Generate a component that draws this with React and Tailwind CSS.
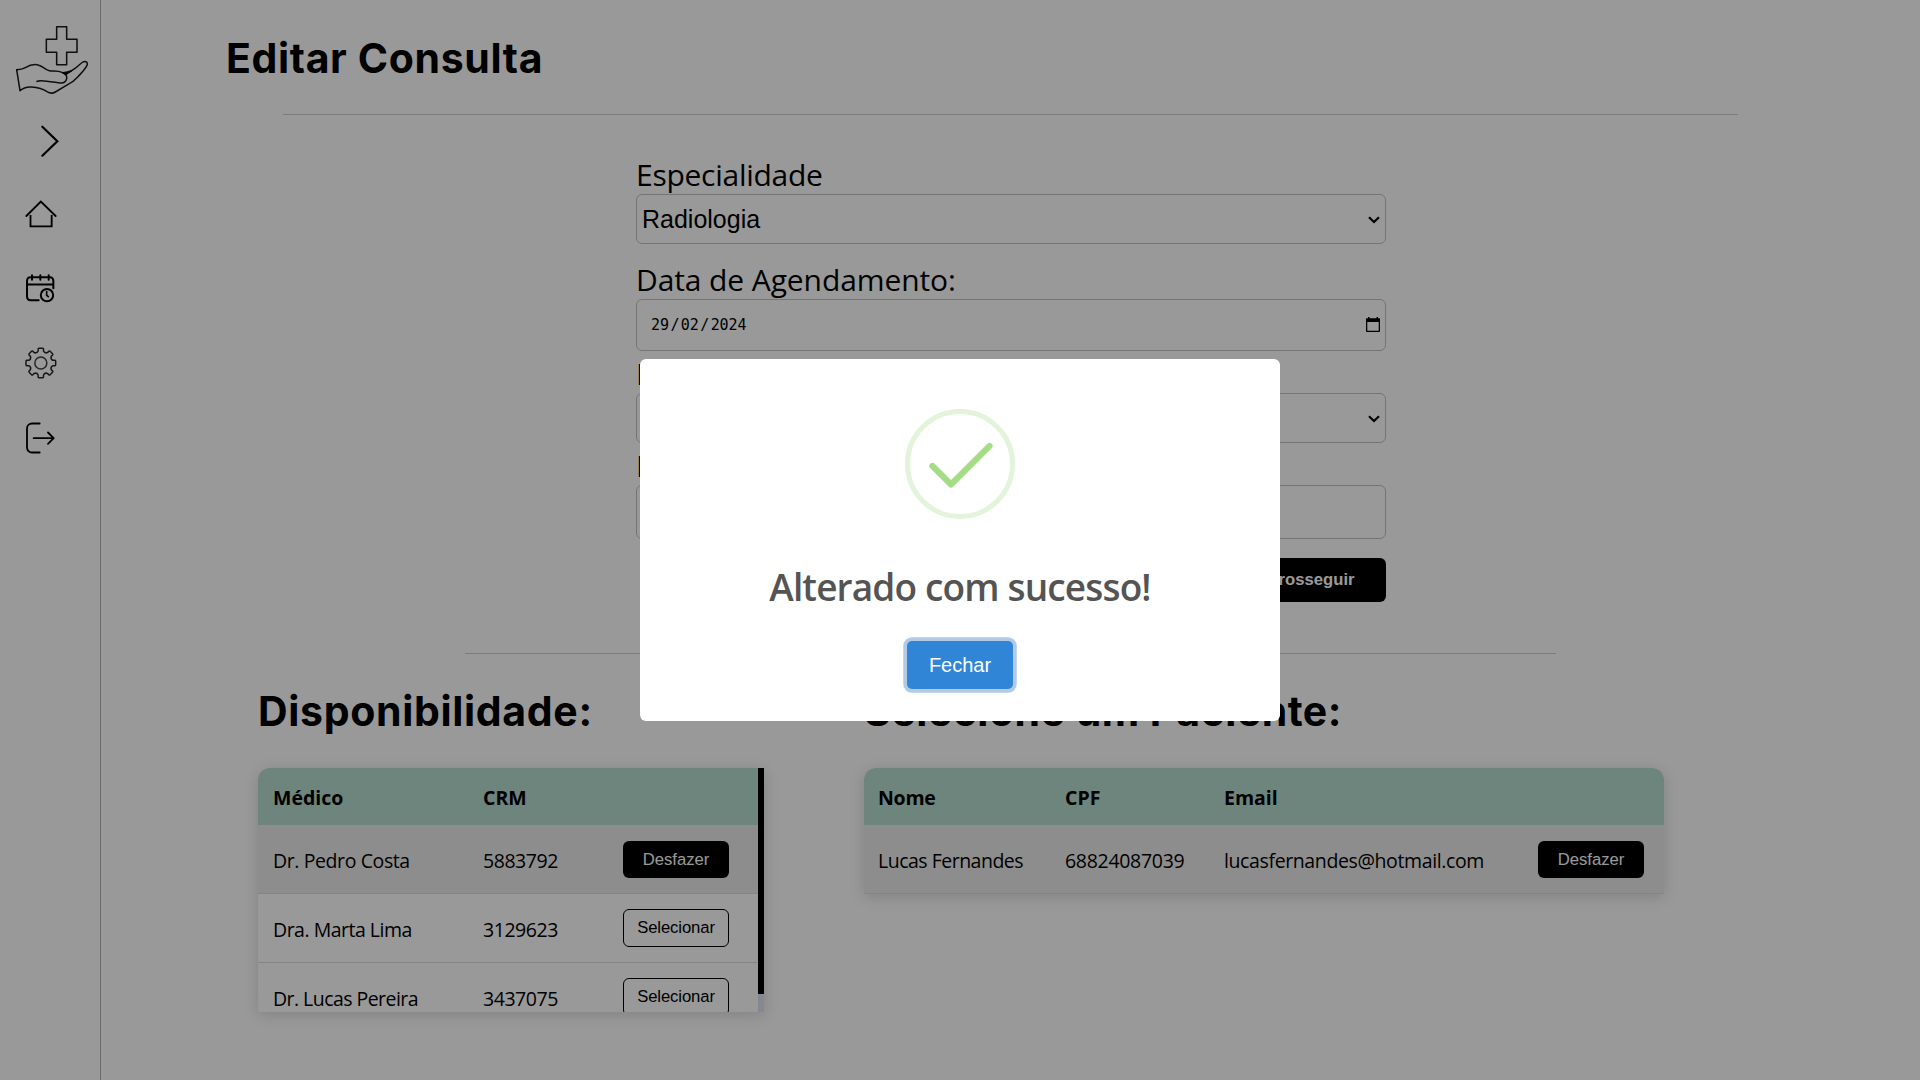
import React from "react";

const doctors = [
  { name: "Dr. Pedro Costa", crm: "5883792", selected: true, track: "tracking-[-0.4px]" },
  { name: "Dra. Marta Lima", crm: "3129623", selected: false, track: "tracking-[-0.5px]" },
  { name: "Dr. Lucas Pereira", crm: "3437075", selected: false, track: "tracking-[-0.55px]" },
];

function Logo() {
  return (
    <svg width="74" height="70" viewBox="43 75 222 210" fill="none" stroke="#000" strokeOpacity="0.9" strokeWidth="4.600" strokeLinejoin="round" strokeLinecap="round">
      <path d="M168 80h30v38h31v39h-31v37h-30v-37h-31v-39h31z" />
      <path d="M48 209C59 209 66 208 74 203C87 195 98 193 109 194C126 196 130 209 146 212C158 214 172 211 184 217C196 222 200 228 198 236C196 245 190 250 179 249C158 246 137 242 121 242C115 242 111 242 109 244" />
      <path d="M186 218C200 218 212 214 222 206C233 198 242 188 249 185C257 182 262 189 259 196C255 207 243 218 232 230C222 241 213 248 201 254L164 276C154 282 147 280 139 275C128 267 108 262 92 261C78 260 67 264 58 272L48 209" />
      <path d="M188 219C200 219 208 216 215 212L197 224Z" fill="#000" strokeWidth="2" />
    </svg>
  );
}

function ChevronRightIcon() {
  return (
    <svg width="20" height="34" viewBox="120 370 60 102" fill="none" stroke="#000" strokeWidth="6.500" strokeLinecap="round" strokeLinejoin="miter">
      <path d="M127 378l45 43.500-45 43.500" />
    </svg>
  );
}

function HomeIcon() {
  return (
    <svg width="32" height="28" viewBox="74 599 96 84" fill="none" stroke="#000" strokeWidth="5.500" strokeLinecap="round">
      <path d="M78 647l43.500-43.500L166 647" />
      <path d="M90.500 647v31h63.500v-31" strokeLinecap="square" />
    </svg>
  );
}

function CalendarIcon() {
  return (
    <svg width="30" height="30" viewBox="76 42 90 90" fill="none" stroke="#000" strokeWidth="6" strokeLinecap="round">
      <path d="M117 120.500H92a10 10 0 0 1-10-10V62a10 10 0 0 1 10-10h59a10 10 0 0 1 10 10v23M82 73.500h79M97 46v13M122 46v13M147 46v13" />
      <circle cx="142" cy="105.500" r="18.500" />
      <path d="M141 95v11l5 4" strokeWidth="5" />
    </svg>
  );
}

function polar(radius, side, angle) {
  const a = (angle * Math.PI) / 180;
  const x = radius * Math.sin(a) + side * Math.cos(a);
  const y = -radius * Math.cos(a) + side * Math.sin(a);
  return `${x.toFixed(2)} ${y.toFixed(2)}`;
}

const gearOutline =
  [0, 45, 90, 135, 180, 225, 270, 315]
    .map(
      (a, i) =>
        `${i ? "L" : "M"}${polar(36, -8, a)}L${polar(42, -8, a)}Q${polar(44.5, -7.5, a)} ${polar(44.5, -5, a)}L${polar(44.5, 5, a)}Q${polar(44.5, 7.5, a)} ${polar(42, 8, a)}L${polar(36, 8, a)}C${polar(30, 11, a)} ${polar(30, -11, a + 45)} ${polar(36, -8, a + 45)}`
    )
    .join("") + "Z";

function GearIcon() {
  return (
    <svg width="32" height="32" viewBox="-47.500 -48 96 96" fill="none" stroke="#000" strokeWidth="4.500" strokeLinejoin="round">
      <circle r="18" strokeWidth="4.500" strokeOpacity="0.75" />
      <path d={gearOutline} strokeOpacity="0.85" />
    </svg>
  );
}

function LogoutIcon() {
  return (
    <svg width="32" height="32" viewBox="76 487 96 96" fill="none" stroke="#000" strokeWidth="5.500" strokeLinecap="round" strokeLinejoin="round">
      <path d="M120 491.500H97a15 15 0 0 0-15 15v57a15 15 0 0 0 15 15h23M102 535.500h60M145 518.500l17 17-17 17" />
    </svg>
  );
}

function Chevron() {
  return (
    <svg className="mt-[2px]" width="12" height="8" viewBox="0 0 12 8" fill="none" stroke="#000" strokeWidth="2.200">
      <path d="M1 1.200l5 4.800 5-4.800" />
    </svg>
  );
}

function Label({ children, className = "" }) {
  return <label className={`block h-[40px] whitespace-nowrap text-[30px] leading-[42px] ${className}`}>{children}</label>;
}

function RowButton({ selected }) {
  return selected ? (
    <button className="h-[37px] w-[106px] rounded-[6px] bg-black font-['Liberation_Sans',sans-serif] text-[16.67px] leading-[37px] text-white">Desfazer</button>
  ) : (
    <button className="h-[38px] w-[106px] rounded-[6px] border border-black font-['Liberation_Sans',sans-serif] text-[16.67px] leading-[36px] tracking-[-0.1px] text-black">Selecionar</button>
  );
}

function Heading({ children, className = "" }) {
  return <h2 className={`h-[40px] whitespace-nowrap font-['Inter',sans-serif] text-[41px] leading-[42px] font-bold ${className}`}>{children}</h2>;
}

export default function App() {
  return (
    <div className="relative flex h-[1080px] w-[1920px] overflow-hidden bg-white font-['Open_Sans',sans-serif] text-black">
      <aside className="flex w-[101px] shrink-0 flex-col border-r border-[#b3b3b3]">
        <div className="mt-[25.300px] ml-[14.600px] h-[69.700px]"><Logo /></div>
        <div className="mt-[28.600px] ml-[40px] h-[34px]"><ChevronRightIcon /></div>
        <div className="mt-[42.100px] ml-[24.700px] h-[28px]"><HomeIcon /></div>
        <div className="mt-[46.300px] ml-[25.300px] h-[30px]"><CalendarIcon /></div>
        <div className="mt-[43.500px] ml-[24.700px] h-[32px]"><GearIcon /></div>
        <div className="mt-[42.800px] ml-[25.300px] h-[32px]"><LogoutIcon /></div>
      </aside>

      <main className="flex w-[1819px] flex-col">
        <Heading className="mt-[37px] ml-[125px] tracking-[0.640px]">Editar Consulta</Heading>
        <hr className="mt-[37px] ml-[182px] w-[1455px] border-[#cfcfcf]" />

        <form className="mt-[39px] ml-[535px] flex w-[750px] flex-col">
          <Label className="tracking-[-0.270px]">Especialidade</Label>
          <div className="flex h-[50px] items-center justify-between rounded-[6px] border border-[#c4c4c4] pr-[5px] pl-[5px] font-['Liberation_Sans',sans-serif] text-[25px]">
            <span className="pt-[2px]">Radiologia</span>
            <Chevron />
          </div>
          <Label className="mt-[15px] tracking-[-0.1px]">Data de Agendamento:</Label>
          <div className="flex h-[52px] items-center justify-between rounded-[6px] border border-[#c4c4c4] pr-[5px] pl-[14px] font-['DejaVu_Sans_Mono',monospace] text-[15px]">
            <span className="flex gap-[1.500px] tracking-[-0.1px]"><span>29</span><span>/</span><span>02</span><span>/</span><span>2024</span></span>
            <svg className="mb-[2px]" width="14" height="15" viewBox="0 0 14 15"><path d="M2 0h1.500v1.300h7V0H12v1.300h1.500c.3 0 .5.200.500.500V14c0 .500-.500 1-1 1H1c-.500 0-1-.500-1-1V1.800c0-.300.200-.500.500-.500H2zM1.300 5v8.700h11.400V5z" fillRule="evenodd" /></svg>
          </div>
          <Label className="mt-[2px]">Médico:</Label>
          <div className="flex h-[50px] items-center justify-end rounded-[6px] border border-[#c4c4c4] pr-[5px]"><Chevron /></div>
          <Label className="mt-[2px]">Horário:</Label>
          <div className="h-[54px] rounded-[6px] border border-[#c4c4c4]" />
          <button type="button" className="mt-[19px] h-[44px] w-[150px] self-end rounded-[6px] bg-black pb-[2px] font-['Liberation_Sans',sans-serif] text-[16.67px] font-bold text-white">Prosseguir</button>
        </form>

        <hr className="mt-[51px] ml-[364px] w-[1091px] border-[#cfcfcf]" />

        <div className="mt-[36px] flex pl-[157px]">
          <section className="w-[507px]">
            <Heading className="tracking-[0.670px]">Disponibilidade:</Heading>
            <div className="mt-[38px] flex h-[244px] w-[506px] overflow-hidden rounded-tl-[12px] shadow-[0_3px_15px_rgba(0,0,0,0.15)]">
              <div className="w-[500px]">
                <div className="grid h-[57px] grid-cols-[210px_140px_1fr] items-center bg-[#b7ded0] pt-[2px] pl-[15px] text-[19.500px] font-bold">
                  <span>Médico</span>
                  <span>CRM</span>
                </div>
                {doctors.map((d) => (
                  <div key={d.crm} className={`grid h-[69px] grid-cols-[210px_140px_1fr] items-center border-b border-[#dddddd] pl-[15px] text-[19.500px] ${d.selected ? "bg-[#ececec]" : "bg-white"}`}>
                    <span className={`pt-[3px] ${d.track}`}>{d.name}</span>
                    <span className="pt-[3px] tracking-[-0.450px]">{d.crm}</span>
                    <RowButton selected={d.selected} />
                  </div>
                ))}
              </div>
              <div className="h-[244px] w-[6px] bg-[#dde5f2]"><div className="h-[226px] bg-black" /></div>
            </div>
          </section>

          <section className="ml-[99px] w-[800px]">
            <Heading className="tracking-[0.480px]">Selecione um Paciente:</Heading>
            <div className="mt-[38px] overflow-hidden rounded-t-[12px] shadow-[0_3px_15px_rgba(0,0,0,0.15)]">
              <div className="grid h-[57px] grid-cols-[186px_159px_1fr_126px] items-center bg-[#b7ded0] pt-[2px] pl-[14px] text-[19.500px] font-bold">
                <span className="tracking-[-0.250px]">Nome</span>
                <span className="pl-px">CPF</span>
                <span className="pl-px">Email</span>
              </div>
              <div className="grid h-[69px] grid-cols-[186px_159px_1fr_126px] items-center border-b border-[#dddddd] bg-[#ececec] pl-[14px] text-[19.500px]">
                <span className="pt-[3px] tracking-[-0.500px]">Lucas Fernandes</span>
                <span className="pt-[3px] pl-px tracking-[-0.300px]">68824087039</span>
                <span className="pt-[3px] pl-px tracking-[-0.380px]">lucasfernandes@hotmail.com</span>
                <RowButton selected />
              </div>
            </div>
          </section>
        </div>
      </main>

      <div className="absolute inset-0 flex items-center justify-center bg-black/40">
        <div className="flex h-[362px] w-[640px] flex-col items-center rounded-[6px] bg-white">
          <svg className="mt-[50px]" width="110" height="110" viewBox="0 0 110 110" fill="none">
            <circle cx="55" cy="55" r="52.500" stroke="#e3f4da" strokeWidth="5" />
            <path d="M27.500 57l18.500 18.500L84.500 37" stroke="#a5dc86" strokeWidth="6.250" strokeLinecap="round" strokeLinejoin="round" />
          </svg>
          <h1 className="mt-[43px] h-[50px] whitespace-nowrap text-[37px] leading-[50px] font-semibold tracking-[-0.850px] text-[#545454]">Alterado com sucesso!</h1>
          <button className="mt-[29px] h-[48px] w-[106px] rounded-[5px] bg-[#3085d6] font-['Liberation_Sans',sans-serif] text-[20px] text-white shadow-[0_0_0_3.750px_#b1cae5]">Fechar</button>
        </div>
      </div>
    </div>
  );
}
